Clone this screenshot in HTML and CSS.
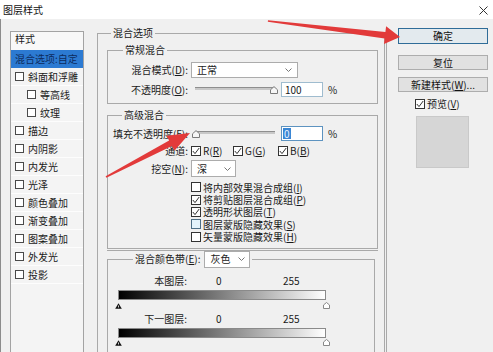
FILE: index.html
```html
<!DOCTYPE html>
<html>
<head>
<meta charset="utf-8">
<title>图层样式</title>
<link rel="stylesheet" href="styles.css">
</head>
<body>
<div class="titlebar">
  <span class="title">图层样式</span>
  <svg class="close" width="9" height="9" viewBox="0 0 9 9"><path d="M0.5 0.5L8.5 8.5M8.5 0.5L0.5 8.5" stroke="#333" stroke-width="1"/></svg>
</div>

<div class="dialog">
  <div class="styles">
    <div class="styles-head">样式</div>
    <div class="item selected">混合选项:自定</div>
    <div class="item"><span class="cb"></span>斜面和浮雕</div>
    <div class="item sub"><span class="cb"></span>等高线</div>
    <div class="item sub"><span class="cb"></span>纹理</div>
    <div class="item"><span class="cb"></span>描边</div>
    <div class="item"><span class="cb"></span>内阴影</div>
    <div class="item"><span class="cb"></span>内发光</div>
    <div class="item"><span class="cb"></span>光泽</div>
    <div class="item"><span class="cb"></span>颜色叠加</div>
    <div class="item"><span class="cb"></span>渐变叠加</div>
    <div class="item"><span class="cb"></span>图案叠加</div>
    <div class="item"><span class="cb"></span>外发光</div>
    <div class="item"><span class="cb"></span>投影</div>
  </div>

  <div class="options">
    <fieldset class="frame outer">
      <legend class="lg-outer">混合选项</legend>

      <fieldset class="frame general">
        <legend class="lg-general">常规混合</legend>
        <div class="row r1">
          <span class="lbl">混合模式(<u>D</u>):</span>
          <div class="select mode"><span>正常</span><svg width="7" height="4" viewBox="0 0 7 4"><path d="M0.5 0.5L3.5 3.5L6.5 0.5" fill="none" stroke="#777"/></svg></div>
        </div>
        <div class="row r2">
          <span class="lbl">不透明度(<u>O</u>):</span>
          <div class="slider">
            <div class="track"></div>
            <svg class="thumb" style="left: 78px" width="8" height="8" viewBox="0 0 8 8"><path d="M0.5 7.5V3.8L4 0.6L7.5 3.8V7.5Z" fill="#f6f6f6" stroke="#7a7a7a"/></svg>
          </div>
          <div class="num">100</div>
          <span class="pct">%</span>
        </div>
      </fieldset>

      <fieldset class="frame advanced">
        <legend class="lg-adv">高级混合</legend>
        <div class="row r3">
          <span class="lbl">填充不透明度(<u>F</u>):</span>
          <div class="slider">
            <div class="track"></div>
            <svg class="thumb" style="left: 0px" width="8" height="8" viewBox="0 0 8 8"><path d="M0.5 7.5V3.8L4 0.6L7.5 3.8V7.5Z" fill="#f6f6f6" stroke="#7a7a7a"/></svg>
          </div>
          <div class="num focus"><span class="sel">0</span></div>
          <span class="pct">%</span>
        </div>
        <div class="row channels">
          <span class="lbl">通道:</span>
          <div class="chk ch-r"><span class="box"><svg width="8" height="8" viewBox="0 0 8 8"><path d="M0.8 4L3 6.6L7.2 1" fill="none" stroke="#333"/></svg></span>R(<u>R</u>)</div>
          <div class="chk ch-g"><span class="box"><svg width="8" height="8" viewBox="0 0 8 8"><path d="M0.8 4L3 6.6L7.2 1" fill="none" stroke="#333"/></svg></span>G(<u>G</u>)</div>
          <div class="chk"><span class="box"><svg width="8" height="8" viewBox="0 0 8 8"><path d="M0.8 4L3 6.6L7.2 1" fill="none" stroke="#333"/></svg></span>B(<u>B</u>)</div>
        </div>
        <div class="row r5">
          <span class="lbl">挖空(<u>N</u>):</span>
          <div class="select knock"><span>深</span><svg width="7" height="4" viewBox="0 0 7 4"><path d="M0.5 0.5L3.5 3.5L6.5 0.5" fill="none" stroke="#777"/></svg></div>
        </div>
        <div class="checks">
          <div class="chk"><span class="box"></span>将内部效果混合成组(<u>I</u>)</div>
          <div class="chk"><span class="box"><svg width="8" height="8" viewBox="0 0 8 8"><path d="M0.8 4L3 6.6L7.2 1" fill="none" stroke="#333"/></svg></span>将剪贴图层混合成组(<u>P</u>)</div>
          <div class="chk"><span class="box"><svg width="8" height="8" viewBox="0 0 8 8"><path d="M0.8 4L3 6.6L7.2 1" fill="none" stroke="#333"/></svg></span>透明形状图层(<u>T</u>)</div>
          <div class="chk"><span class="box hover"></span>图层蒙版隐藏效果(<u>S</u>)</div>
          <div class="chk"><span class="box"></span>矢量蒙版隐藏效果(<u>H</u>)</div>
        </div>
      </fieldset>

      <div class="rule"></div>

      <fieldset class="frame band">
        <legend class="lg-band">
          <span class="band-lbl">混合颜色带(<u>E</u>):</span>
          <span class="select gray"><span>灰色</span><svg width="7" height="4" viewBox="0 0 7 4"><path d="M0.5 0.5L3.5 3.5L6.5 0.5" fill="none" stroke="#777"/></svg></span>
        </legend>
        <div class="band-row first">
          <span class="lbl2">本图层:</span><span class="n0">0</span><span>255</span>
        </div>
        <div class="bar"></div>
        <div class="stops">
          <svg width="7" height="6" viewBox="0 0 7 6"><path d="M3.5 0.3L6.8 5.7H0.2Z" fill="#111"/><path d="M3.5 2.5V4.5" stroke="#fff" stroke-width="0.8"/></svg>
          <svg width="7" height="7" viewBox="0 0 7 7"><path d="M3.5 0.5L6.5 3V6.5H0.5V3Z" fill="#fff" stroke="#888"/></svg>
        </div>
        <div class="band-row second">
          <span class="lbl2">下一图层:</span><span class="n0">0</span><span>255</span>
        </div>
        <div class="bar"></div>
        <div class="stops low">
          <svg width="7" height="6" viewBox="0 0 7 6"><path d="M3.5 0.3L6.8 5.7H0.2Z" fill="#111"/><path d="M3.5 2.5V4.5" stroke="#fff" stroke-width="0.8"/></svg>
          <svg width="7" height="7" viewBox="0 0 7 7"><path d="M3.5 0.5L6.5 3V6.5H0.5V3Z" fill="#fff" stroke="#888"/></svg>
        </div>
      </fieldset>
    </fieldset>
  </div>

  <div class="divider"></div>

  <div class="side">
    <div class="btn default">确定</div>
    <div class="btn reset">复位</div>
    <div class="btn newstyle">新建样式(<u>W</u>)...</div>
    <div class="preview"><span class="box"><svg width="8" height="8" viewBox="0 0 8 8"><path d="M0.8 4L3 6.6L7.2 1" fill="none" stroke="#333"/></svg></span>预览(<u>V</u>)</div>
    <div class="swatch"></div>
  </div>
</div>

<svg class="arrows" width="493" height="352" viewBox="0 0 493 352">
  <polygon points="268,20.2 385.4,32 386.1,26.3 400,37 384,44.1 384.6,38.4 267.8,21.8" fill="#e23a3a"/>
  <polygon points="105.6,176.3 169.1,140.5 166.6,135.7 190,133 174.4,150.7 171.9,145.9 106.4,177.7" fill="#e23a3a"/>
</svg>
</body>
</html>
```

FILE: styles.css
```css
html, body
{
  margin: 0;
  padding: 0;
}
body
{
  width: 493px;
  height: 352px;
  overflow: hidden;
  position: relative;
  background-color: #f0f0f0;
  font-family: "Noto Sans CJK SC", "Liberation Sans", sans-serif;
  font-size: 10px;
  line-height: 12px;
  color: #1a1a1a;
}
u
{
  text-decoration: underline;
}

/* title bar */
.titlebar
{
  height: 19px;
  background-color: #fff;
  display: flex;
  align-items: center;
  justify-content: space-between;
  padding: 0 5px 0 3px;
}
.title
{
  color: #111;
}
.close
{
  margin-top: 1px;
}

.dialog
{
  display: flex;
  height: 333px;
  overflow: hidden;
  border-left: 1px solid #8c8c8c;
}

/* styles list */
.styles
{
  width: 74px;
  height: 340px;
  box-sizing: border-box;
  margin: 12px 0 0 9px;
  border: 1px solid #a3a3a3;
  background-color: #f4f4f4;
  flex: none;
}
.styles-head
{
  height: 18px;
  line-height: 14px;
  padding-left: 4px;
  background-color: #f8f8f8;
}
.item
{
  height: 18px;
  box-sizing: border-box;
  display: flex;
  align-items: center;
  padding-left: 4px;
  border-bottom: 1px solid #fdfdfd;
  white-space: nowrap;
}
.item.sub
{
  padding-left: 16px;
}
.item.selected
{
  background-color: #2c7ad2;
  color: #0c2b5e;
  border-bottom-color: #2c7ad2;
}
.cb
{
  width: 9px;
  height: 9px;
  box-sizing: border-box;
  border: 1px solid #4a4a4a;
  background-color: #fff;
  margin-right: 4px;
  flex: none;
}

/* middle options */
.options
{
  width: 288px;
  margin-left: 13px;
  padding-top: 8px;
  flex: none;
}
.frame
{
  margin: 0;
  padding: 0;
  min-width: 0;
  border: 1px solid #a9a9a9;
}
.frame legend
{
  line-height: 12px;
  padding: 0 2px;
}
.outer
{
  padding: 5px 6px 0 9px;
  min-height: 320px;
}
.lg-outer
{
  margin-left: 4px;
}
.lg-general
{
  margin-left: 15px;
}
.lg-adv
{
  margin-left: 14px;
}
.general
{
  padding-bottom: 6px;
}
.advanced
{
  margin-top: 5px;
  padding-bottom: 5px;
}

.row
{
  display: flex;
  align-items: center;
  white-space: nowrap;
}
.lbl
{
  width: 80px;
  margin-right: 3px;
  text-align: right;
  flex: none;
}
.r1
{
  margin-top: 6px;
  height: 16px;
}
.r2
{
  margin-top: 4px;
  height: 15px;
}
.r3
{
  margin-top: 5px;
  height: 15px;
}
.channels
{
  margin-top: 4px;
  height: 11px;
}
.r5
{
  margin-top: 4px;
  height: 17px;
}

.select
{
  height: 17px;
  box-sizing: border-box;
  border: 1px solid #acacac;
  background-color: #fff;
  display: flex;
  align-items: center;
  justify-content: space-between;
  padding: 0 5px;
}
.select.mode
{
  width: 107px;
  height: 16px;
}
.select.knock
{
  width: 45px;
  padding-right: 4px;
}

.slider
{
  position: relative;
  width: 86px;
  height: 15px;
  margin-left: 1px;
}
.track
{
  margin: 5px 3px 0 3px;
  height: 2px;
  background-color: #c8c8c8;
  border-top: 1px solid #8e8e8e;
}
.thumb
{
  position: absolute;
  top: 4px;
}
.num
{
  width: 42px;
  height: 15px;
  box-sizing: border-box;
  margin-left: 3px;
  border: 1px solid #9fbccf;
  background-color: #fff;
  padding-left: 3px;
  line-height: 13px;
}
.num.focus
{
  border-color: #5d93c0;
  padding-left: 1px;
}
.sel
{
  display: inline-block;
  background-color: #3a86d4;
  color: #e8f2ff;
  padding: 0 1px;
  line-height: 11px;
}
.pct
{
  margin-left: 5px;
}

.chk
{
  display: flex;
  align-items: center;
  white-space: nowrap;
  line-height: 11px;
}
.box
{
  width: 10px;
  height: 10px;
  box-sizing: border-box;
  border: 1px solid #333;
  background-color: #fff;
  margin-right: 2px;
  display: flex;
  align-items: center;
  justify-content: center;
  flex: none;
}
.box.hover
{
  background-color: #e3f3fb;
  border-color: #4d6f86;
}
.ch-r
{
  width: 42px;
}
.ch-g
{
  width: 45px;
}
.checks
{
  margin-top: 4px;
  padding-left: 83px;
}
.checks .chk
{
  height: 12.4px;
}

.rule
{
  margin-top: 1px;
  height: 1px;
  background-color: #a9a9a9;
}

/* blending band */
.band
{
  margin-right: 3px;
  min-height: 110px;
}
.lg-band
{
  margin-left: 25px;
  padding: 5px 4px 0 2px;
  display: flex;
  align-items: center;
}
.select.gray
{
  width: 46px;
  margin-left: 4px;
  padding-right: 4px;
}
.band-row
{
  display: flex;
  white-space: nowrap;
}
.band-row.first
{
  margin-top: 7px;
}
.band-row.second
{
  margin-top: 4px;
}
.lbl2
{
  width: 79px;
  text-align: right;
}
.n0
{
  width: 67px;
  margin-left: 29px;
}
.bar
{
  margin: 3px 0 0 10px;
  width: 208px;
  height: 10px;
  box-sizing: border-box;
  border: 1px solid #8a8a8a;
  background: linear-gradient(to right, #000, #fff);
}
.stops
{
  margin: 2px 0 0 7px;
  width: 215px;
  height: 7px;
  display: flex;
  justify-content: space-between;
  align-items: flex-end;
}
.stops.low
{
  margin-top: 1px;
}

/* right column */
.divider
{
  width: 1px;
  margin: 14px 0 0 1px;
  background-color: #a9a9a9;
  flex: none;
}
.side
{
  padding: 9px 0 0 11px;
  flex: none;
}
.btn
{
  width: 90px;
  height: 15px;
  box-sizing: border-box;
  border: 1px solid #adadad;
  background-color: #e1e1e1;
  text-align: center;
  line-height: 13px;
  color: #111;
}
.btn.default
{
  height: 16px;
  line-height: 14px;
  border-color: #2f6c98;
  background-color: #e3eaee;
}
.btn.reset
{
  margin-top: 11px;
}
.btn.newstyle
{
  margin-top: 7px;
}
.preview
{
  margin: 6px 0 0 17px;
  height: 11px;
  display: flex;
  align-items: center;
  white-space: nowrap;
}
.swatch
{
  width: 53px;
  height: 52px;
  box-sizing: border-box;
  margin: 7px 0 0 18px;
  background-color: #d6d6d6;
  border: 1px solid #c9c9c9;
}

/* red annotation arrows */
.arrows
{
  position: absolute;
  left: 0;
  top: 0;
  pointer-events: none;
}
```
